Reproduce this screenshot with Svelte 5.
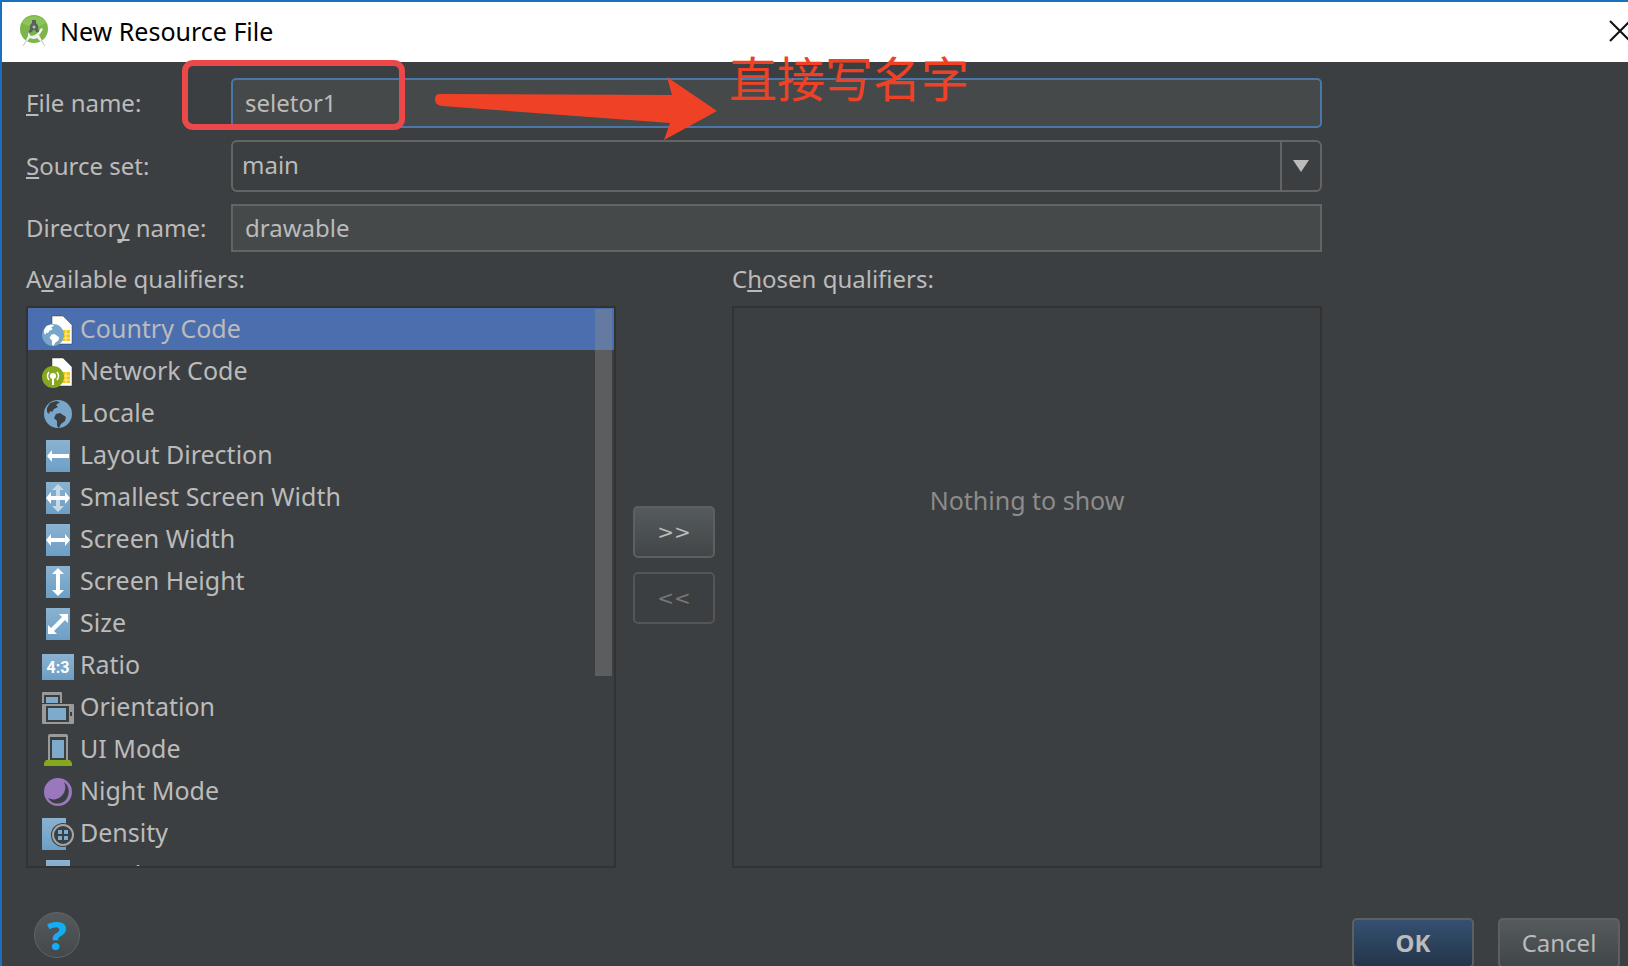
<script>
  let fileName = $state('seletor1');
  let sourceSet = $state('main');
  let directory = $state('drawable');
  let selected = $state(0);

  const qualifiers = [
    { icon: 'country', label: 'Country Code' },
    { icon: 'network', label: 'Network Code' },
    { icon: 'locale', label: 'Locale' },
    { icon: 'direction', label: 'Layout Direction' },
    { icon: 'smallest', label: 'Smallest Screen Width' },
    { icon: 'width', label: 'Screen Width' },
    { icon: 'height', label: 'Screen Height' },
    { icon: 'size', label: 'Size' },
    { icon: 'ratio', label: 'Ratio' },
    { icon: 'orientation', label: 'Orientation' },
    { icon: 'ui', label: 'UI Mode' },
    { icon: 'night', label: 'Night Mode' },
    { icon: 'density', label: 'Density' },
    { icon: 'touch', label: 'Touch Screen' }
  ];
</script>

{#snippet land(color)}
  <path fill={color} d="M5 10 L8 5 L14 3 L18 4 L14 7 L16 9 L12 11 L10 14 L8 13 L7 16 L5 14 Z M14 16 L18 15 L24 19 L23 23 L19 26 L17 30 L15 28 L15 23 L12 20 Z" />
{/snippet}

{#snippet qualifierIcon(name)}
  <svg class="icon" viewBox="0 0 32 32" aria-hidden="true">
    {#if name === 'country' || name === 'network'}
      <path d="M10 2 H21 L30 11 V30 H10 Z" fill="#fff" stroke="#2c2f31" stroke-opacity=".45" />
      <rect x="18" y="16" width="10" height="11" fill="#f2c714" />
      <path d="M18 20 H28 M18 24 H28 M24 16 V27" stroke="#fff0a0" />
      {#if name === 'country'}
        <circle cx="11" cy="21" r="11" fill="#76a6ca" />
        <g transform="translate(-2 8) scale(.8)">{@render land('#fff')}</g>
      {:else}
        <circle cx="11" cy="21" r="11" fill="#86a81f" />
        <circle cx="11" cy="20" r="3" fill="#fff" />
        <path d="M11 20 V29" stroke="#fff" stroke-width="2" />
        <path d="M7 16 Q4 20 7 24 M15 16 Q18 20 15 24" fill="none" stroke="#fff" stroke-width="1.5" />
      {/if}
    {:else if name === 'locale'}
      <circle cx="16" cy="16" r="14" fill="#78a6ca" />
      {@render land('#3c3f41')}
    {:else if name === 'ratio'}
      <rect y="4" width="32" height="26" fill="url(#sky)" />
      <text x="16" y="23" text-anchor="middle" font-family="Roboto" font-size="16" font-weight="700" fill="#fff">4:3</text>
    {:else if name === 'orientation'}
      <path d="M0 11 V1 Q0 0 1 0 H19 Q20 0 20 1 V11 H18 V3 H2 V11 Z" fill="#9a9a9a" />
      <rect x="4" y="5" width="12" height="6" fill="#7eaacb" />
      <rect y="12" width="32" height="20" rx="1" fill="#9a9a9a" />
      <rect x="4" y="14" width="23" height="16" fill="#3c3f41" />
      <rect x="6" y="16" width="18" height="12" fill="#7eaacb" />
      <rect x="28" y="20" width="2" height="4" fill="#3c3f41" />
    {:else if name === 'ui'}
      <path d="M6 26 V2 Q6 0 8 0 H24 Q26 0 26 2 V26 H24 V3 H8 V26 Z" fill="#9a9a9a" />
      <rect x="10" y="6" width="12" height="18" fill="#7eaacb" />
      <path d="M4 26 H28 L30 29 V32 H2 V29 Z" fill="#86a81f" />
    {:else if name === 'night'}
      <circle cx="16" cy="16" r="14" fill="#9a78bd" />
      <path d="M22 6 A12 12 0 0 1 6 22 A11 11 0 0 0 26 20 A12 12 0 0 0 22 6 Z" fill="#3c3f41" />
    {:else if name === 'density'}
      <rect width="24" height="32" fill="url(#sky)" />
      <circle cx="21" cy="17" r="12" fill="#3c3f41" />
      <circle cx="21" cy="17" r="10" fill="none" stroke="#a4a4a4" stroke-width="2" />
      <path d="M16 12 h4 v4 h-4 Z M22 12 h4 v4 h-4 Z M16 18 h4 v4 h-4 Z M22 18 h4 v4 h-4 Z" fill="#78add3" />
    {:else}
      <rect x="4" width="24" height="32" fill="url(#sky)" />
      {#if name === 'direction'}
        <path d="M5 16 L10 10 V14 H27 V18 H10 V22 Z" fill="#fff" />
      {:else if name === 'height'}
        <path d="M16 2 L22 8 H18 V24 H22 L16 30 L10 24 H14 V8 H10 Z" fill="#fff" />
      {:else if name === 'size'}
        <path d="M26 6 V15 L23 12 L12 23 L15 26 H6 V17 L9 20 L20 9 L17 6 Z" fill="#fff" />
      {:else if name === 'smallest' || name === 'width'}
        {#if name === 'smallest'}
          <path d="M16 2 L22 8 H18 V24 H22 L16 30 L10 24 H14 V8 H10 Z" fill="#c5dae8" />
        {/if}
        <path d="M4 16 L9 10 V14 H23 V10 L28 16 L23 22 V18 H9 V22 Z" fill="#fff" />
      {/if}
    {/if}
  </svg>
{/snippet}

<svg class="defs" aria-hidden="true">
  <linearGradient id="sky" x1="0" y1="0" x2="0" y2="1">
    <stop offset="0" stop-color="#8bb2cf" />
    <stop offset="1" stop-color="#6c9fc6" />
  </linearGradient>
</svg>

<main class="dialog">
  <header class="titlebar">
    <svg class="logo" viewBox="0 0 28 32" aria-hidden="true">
      <circle cx="14" cy="14" r="14" fill="#7cb64a" />
      <path d="M2 8 A14 14 0 0 1 26 8 L14 14 Z" fill="#8dc35c" />
      <path d="M12 5 H16 V8 Q19 10 18 14 L20 18 L16 17 L15 15 H13 L12 17 L8 18 L10 14 Q9 10 12 8 Z" fill="#5a625c" />
      <circle cx="14" cy="12" r="1.5" fill="#b8c4b4" />
      <path d="M8 17 L11 21 Q17 21 21 13 L23 14 Q21 18 19 20 L25 31 L17 23 Q14 25 10 23 L3 31 L8 21 Z" fill="#f1f3f1" />
      <path d="M7 25 L3 31 M21 25 L25 31" stroke="#c3c6c3" />
    </svg>
    <h1>New Resource File</h1>
    <button class="close" aria-label="Close">
      <svg viewBox="0 0 22 22" aria-hidden="true"><path d="M1 1 L21 21 M21 1 L1 21" stroke="#111" stroke-width="2" /></svg>
    </button>
  </header>

  <div class="content">
    <div class="form">
      <label for="file"><u>F</u>ile name:</label>
      <input id="file" class="file" type="text" bind:value={fileName} />
      <label for="source"><u>S</u>ource set:</label>
      <div class="combo">
        <select id="source" bind:value={sourceSet}>
          <option>main</option>
          <option>debug</option>
          <option>release</option>
        </select>
        <span class="arrow"><svg viewBox="0 0 16 12" aria-hidden="true"><path d="M0 0 H16 L8 12 Z" fill="#bbb" /></svg></span>
      </div>
      <label for="dir">Director<u>y</u> name:</label>
      <input id="dir" class="dir" type="text" bind:value={directory} />
    </div>

    <div class="lists">
      <h2 id="available">A<u>v</u>ailable qualifiers:</h2>
      <h2 id="chosen" class="chosen-title">C<u>h</u>osen qualifiers:</h2>
      <div class="panel">
        <ul role="listbox" aria-labelledby="available">
          {#each qualifiers as q, i}
            <li role="option" aria-selected={selected === i}>
              <button class="row" class:selected={selected === i} onclick={() => (selected = i)}>
                {@render qualifierIcon(q.icon)}
                <span>{q.label}</span>
              </button>
            </li>
          {/each}
        </ul>
        <div class="thumb"></div>
      </div>
      <div class="movers">
        <button class="btn move" aria-label="Add qualifier">&gt;&gt;</button>
        <button class="btn move off" aria-label="Remove qualifier" disabled>&lt;&lt;</button>
      </div>
      <div class="panel empty" role="group" aria-labelledby="chosen">Nothing to show</div>
    </div>
  </div>

  <footer>
    <button class="help" aria-label="Help">?</button>
    <div class="actions">
      <button class="btn ok">OK</button>
      <button class="btn">Cancel</button>
    </div>
  </footer>

  <div class="mark"></div>
  <svg class="pointer" viewBox="0 0 284 66" aria-hidden="true">
    <path d="M5 18 L238 19 L233 1 L283 35 L230 64 L236 47 L8 30 Q1 29 1 24 Q1 18 5 18 Z" fill="#ef4126" />
  </svg>
  <p class="note">直接写名字</p>
</main>

<style>
  :global(body) {
    margin: 0;
    background: #3c3f41;
  }

  .dialog {
    position: relative;
    box-sizing: border-box;
    height: 100vh;
    overflow: hidden;
    display: flex;
    flex-direction: column;
    border: solid #1a70bd;
    border-width: 2px 0 0 2px;
    background: #3c3f41;
    color: #bbb;
    font: 24px/32px 'Noto Sans', 'Noto Sans CJK SC', sans-serif;
  }

  .defs {
    position: absolute;
    width: 0;
    height: 0;
  }

  button, input, select {
    box-sizing: border-box;
    margin: 0;
    font: inherit;
    color: inherit;
    outline: none;
  }

  h1, h2, p, ul {
    margin: 0;
    padding: 0;
    font-size: 24px;
    font-weight: 400;
    list-style: none;
  }

  u {
    text-decoration-thickness: 2px;
    text-underline-offset: 2px;
    text-decoration-skip-ink: none;
  }

  .titlebar {
    flex: none;
    box-sizing: border-box;
    display: flex;
    align-items: center;
    gap: 12px;
    height: 60px;
    padding: 0 0 2px 18px;
    background: #fff;
    color: #000;
  }

  .titlebar h1 {
    font-size: 25px;
  }

  .logo {
    width: 28px;
    height: 32px;
  }

  .close {
    display: flex;
    margin: 0 -3px 0 auto;
    padding: 0;
    border: 0;
    background: none;
  }

  .close svg {
    width: 22px;
    height: 22px;
  }

  .content {
    padding: 16px 306px 0 24px;
  }

  .form {
    display: grid;
    grid-template-columns: 205px 1fr;
    row-gap: 12px;
    align-items: center;
  }

  .file, .dir {
    width: 100%;
    height: 48px;
    padding: 0 12px 2px;
    border: 2px solid #646464;
    background: #45494a;
  }

  .file {
    height: 50px;
    border-color: #4a77a8;
    border-radius: 5px;
  }

  .combo {
    display: grid;
    grid-template-columns: 1fr 40px;
    height: 52px;
    box-sizing: border-box;
    border: 2px solid #646464;
    border-radius: 6px;
  }

  .combo select {
    grid-area: 1 / 1 / 2 / 3;
    appearance: none;
    padding: 0 9px 2px;
    border: 0;
    background: transparent;
  }

  .combo option {
    background: #3c3f41;
  }

  .arrow {
    grid-area: 1 / 2;
    display: grid;
    place-items: center;
    border-left: 2px solid #646464;
    pointer-events: none;
  }

  .arrow svg {
    width: 16px;
    height: 12px;
  }

  .lists {
    display: grid;
    grid-template-columns: 1fr 82px 1fr;
    grid-template-rows: 54px 562px;
    column-gap: 17px;
    align-items: center;
  }

  .chosen-title {
    grid-column: 3;
  }

  .panel {
    position: relative;
    box-sizing: border-box;
    height: 100%;
    overflow: hidden;
    border: 2px solid #323232;
    font-size: 25px;
  }

  .panel ul {
    font-size: inherit;
  }

  .row {
    display: flex;
    align-items: center;
    gap: 6px;
    width: 100%;
    height: 42px;
    padding: 0 14px;
    border: 0;
    background: none;
    text-align: left;
  }

  .row span {
    padding-bottom: 2px;
  }

  .row.selected {
    background: #4b6eaf;
  }

  .icon {
    flex: none;
    width: 32px;
    height: 32px;
    padding-top: 2px;
  }

  .thumb {
    position: absolute;
    top: 1px;
    right: 2px;
    width: 17px;
    height: 367px;
    background: rgba(140, 140, 140, .4);
  }

  .movers {
    align-self: start;
    display: grid;
    gap: 14px;
    padding-top: 200px;
  }

  .empty {
    padding-top: 176px;
    text-align: center;
    color: #8c8c8c;
  }

  .btn {
    width: 122px;
    height: 50px;
    padding: 0;
    border: 2px solid #5e6060;
    border-radius: 5px;
    background: linear-gradient(#555a5c, #414648);
  }

  .btn.move {
    width: 82px;
    height: 52px;
    font-family: 'DejaVu Sans', sans-serif;
    font-size: 20px;
  }

  .btn.off {
    background: none;
    border-color: #555;
    color: #777;
  }

  .btn.ok {
    background: linear-gradient(#365072, #233549);
    font-weight: 700;
  }

  footer {
    display: flex;
    align-items: flex-start;
    justify-content: space-between;
    padding: 44px 8px 0 32px;
  }

  .actions {
    display: flex;
    gap: 24px;
    padding-top: 6px;
  }

  .help {
    width: 46px;
    height: 46px;
    padding: 0;
    border: 1px solid #646464;
    border-radius: 50%;
    background: linear-gradient(#54595b, #43484a);
    color: #12adf3;
    font-size: 40px;
    font-weight: 800;
    line-height: 40px;
  }

  .mark {
    position: absolute;
    top: 58px;
    left: 180px;
    box-sizing: border-box;
    width: 223px;
    height: 70px;
    border: 6px solid #ec4849;
    border-radius: 11px;
  }

  .pointer {
    position: absolute;
    top: 74px;
    left: 432px;
    width: 284px;
    height: 66px;
  }

  .note {
    position: absolute;
    top: 42px;
    left: 727px;
    color: #ef4126;
    font: 400 48px/64px 'Noto Sans CJK SC', sans-serif;
  }
</style>
